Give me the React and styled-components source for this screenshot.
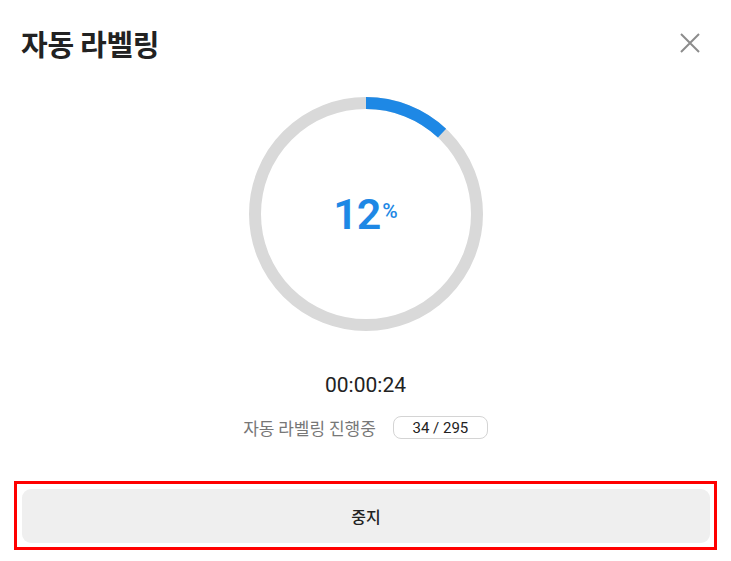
import React from 'react';
import styled, { createGlobalStyle } from 'styled-components';

const GlobalStyle = createGlobalStyle`
  html, body {
    margin: 0;
    padding: 0;
    background: #ffffff;
  }
  body {
    font-family: Roboto, "Noto Sans CJK KR", sans-serif;
    color: #222222;
  }
`;

const Dialog = styled.div`
  width: 731px;
  height: 561px;
  box-sizing: border-box;
  display: flex;
  flex-direction: column;
  background: #ffffff;
`;

const Header = styled.div`
  display: flex;
  align-items: center;
  justify-content: space-between;
  padding: 24px 30px 0 21px;
  height: 38px;
`;

const Title = styled.h1`
  margin: 0;
  font-family: "Noto Sans CJK KR", sans-serif;
  font-size: 29px;
  font-weight: 700;
  line-height: 38px;
  letter-spacing: -0.3px;
  color: #222222;
`;

const CloseButton = styled.button`
  width: 22px;
  height: 22px;
  padding: 0;
  border: none;
  background: none;
  display: flex;
  align-items: center;
  justify-content: center;
  cursor: pointer;
`;

const Body = styled.div`
  display: flex;
  flex-direction: column;
  align-items: center;
  padding-top: 35px;
`;

const Ring = styled.div`
  position: relative;
  width: 234px;
  height: 234px;
`;

const RingLabel = styled.div`
  position: absolute;
  inset: 0;
  display: flex;
  align-items: center;
  justify-content: center;
  color: #1e88e5;
`;

const Percent = styled.span`
  font-family: Roboto, sans-serif;
  font-size: 43px;
  font-weight: 600;
  line-height: 1;
  letter-spacing: -1px;
`;

const PercentSign = styled.span`
  font-family: Roboto, sans-serif;
  font-size: 21px;
  font-weight: 500;
  margin-left: 2px;
  margin-top: -6px;
`;

const Timer = styled.div`
  margin-top: 42px;
  font-family: Roboto, sans-serif;
  font-size: 21px;
  line-height: 24px;
  color: #222222;
`;

const StatusRow = styled.div`
  margin-top: 18px;
  display: flex;
  align-items: center;
  gap: 17px;
`;

const StatusText = styled.span`
  font-family: "Noto Sans CJK KR", sans-serif;
  font-size: 17px;
  color: #777777;
`;

const Counter = styled.span`
  display: inline-flex;
  align-items: center;
  justify-content: center;
  width: 95px;
  height: 23px;
  box-sizing: border-box;
  border: 1px solid #d4d4d4;
  border-radius: 8px;
  font-family: Roboto, sans-serif;
  font-size: 15px;
  color: #222222;
`;

const Footer = styled.div`
  margin: 41px 14px 0;
  border: 3px solid #ff0000;
  padding: 5px 4px 4px 5px;
`;

const StopButton = styled.button`
  width: 100%;
  height: 54px;
  border: none;
  border-radius: 9px;
  background: #efefef;
  font-family: "Noto Sans CJK KR", sans-serif;
  font-size: 16px;
  font-weight: 500;
  color: #222222;
  cursor: pointer;
`;

const ProgressRing = ({ value }) => {
  const r = 111;
  const c = 2 * Math.PI * r;
  return (
    <svg width="234" height="234" viewBox="0 0 234 234">
      <circle cx="117" cy="117" r={r} fill="none" stroke="#d9d9d9" strokeWidth="12" />
      <circle
        cx="117"
        cy="117"
        r={r}
        fill="none"
        stroke="#1e88e5"
        strokeWidth="12"
        strokeDasharray={`${(c * value) / 100} ${c}`}
        transform="rotate(-90 117 117)"
      />
    </svg>
  );
};

export default function App() {
  const done = 34;
  const total = 295;
  const pct = Math.round((done / total) * 100);
  return (
    <>
      <GlobalStyle />
      <Dialog>
        <Header>
          <Title>자동 라벨링</Title>
          <CloseButton aria-label="닫기">
            <svg width="22" height="22" viewBox="0 0 22 22">
              <path d="M2 2 L20 20 M20 2 L2 20" stroke="#8c8c8c" strokeWidth="2" fill="none" />
            </svg>
          </CloseButton>
        </Header>
        <Body>
          <Ring>
            <ProgressRing value={pct} />
            <RingLabel>
              <Percent>{pct}</Percent>
              <PercentSign>%</PercentSign>
            </RingLabel>
          </Ring>
          <Timer>00:00:24</Timer>
          <StatusRow>
            <StatusText>자동 라벨링 진행중</StatusText>
            <Counter>{done} / {total}</Counter>
          </StatusRow>
        </Body>
        <Footer>
          <StopButton>중지</StopButton>
        </Footer>
      </Dialog>
    </>
  );
}
